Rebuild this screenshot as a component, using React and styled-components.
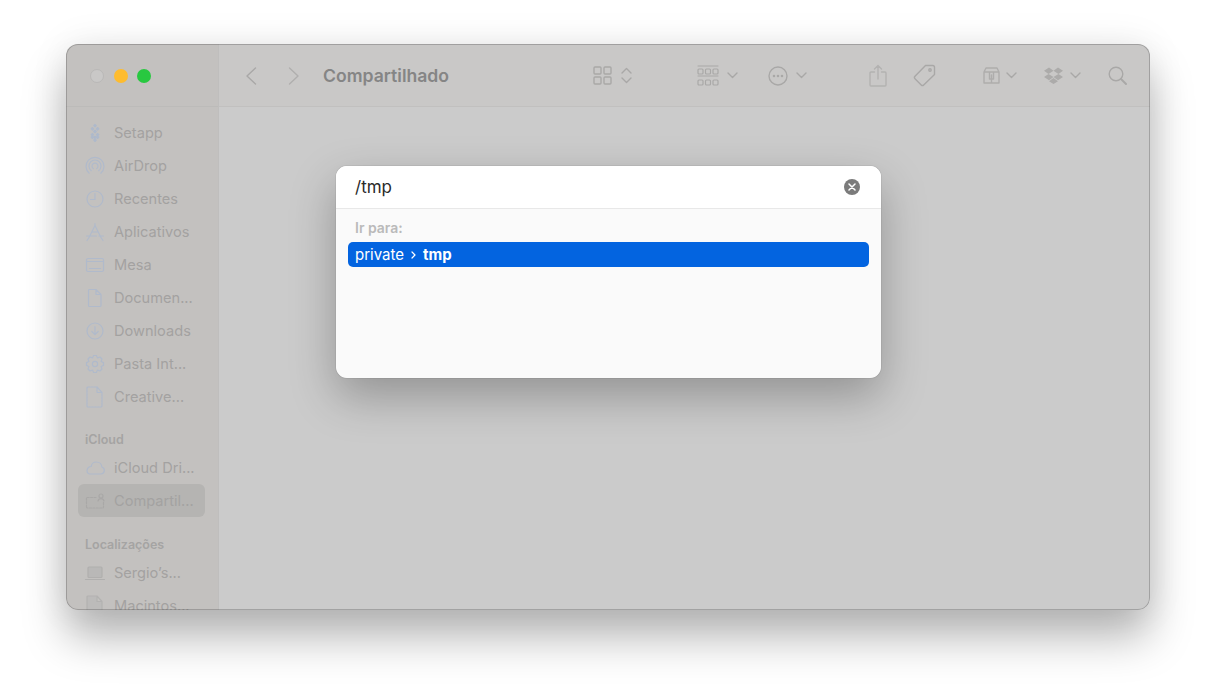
import React from "react";
import styled, { createGlobalStyle } from "styled-components";

const Global = createGlobalStyle`
  html, body { margin: 0; padding: 0; background: #fff; }
  #root { width: 1216px; height: 697px; overflow: hidden; }
  * { box-sizing: border-box; }
`;

const Page = styled.div`
  width: 1216px;
  height: 697px;
  padding: 44px 66px 87px;
  background: #fff;
  font-family: Inter, "Noto Sans", "Liberation Sans", sans-serif;
`;
const Frame = styled.div`
  width: 100%;
  height: 100%;
  border-radius: 12px;
  box-shadow: 0 0 38px rgba(0, 0, 0, 0.08), 0 28px 44px rgba(0, 0, 0, 0.28);
`;
const Window = styled.div`
  position: relative;
  display: flex;
  width: 100%;
  height: 100%;
  border-radius: 12px;
  overflow: hidden;
  background: #cbcbcb;
  &::after {
    content: "";
    position: absolute;
    inset: 0;
    border-radius: 12px;
    pointer-events: none;
    box-shadow: inset 0 0 0 1px rgba(70, 70, 70, 0.3);
  }
`;
const Sidebar = styled.aside`
  flex: 0 0 153px;
  background: #c3c1bf;
  border-right: 1px solid #bfbebd;
  overflow: hidden;
`;
const SideHeader = styled.div`
  height: 63px;
  padding: 1px 0 0 24px;
  display: flex;
  align-items: center;
  gap: 9.5px;
  border-bottom: 1px solid #bcbbb9;
`;
const Light = styled.span`
  width: 14px;
  height: 14px;
  border-radius: 50%;
  background: ${(p) => p.$color};
  border: 1px solid ${(p) => p.$edge || "transparent"};
`;
const SideList = styled.nav`
  padding: 9px 13px 0 12px;
  display: flex;
  flex-direction: column;
`;
const SideRow = styled.div`
  height: 33px;
  flex: none;
  display: flex;
  align-items: center;
  gap: 8px;
  padding-left: 7px;
  border-radius: 6px;
  background: ${(p) => (p.$active ? "#b5b4b2" : "transparent")};
  color: #a3a2a1;
  font-size: 14.6px;
  white-space: nowrap;
`;
const SideIcon = styled.svg`
  width: 22px;
  height: 22px;
  margin-left: -1px;
  flex: none;
  fill: none;
  stroke: ${(p) => p.$tone || "#b0bacb"};
  stroke-width: 1.2;
  stroke-linecap: round;
  stroke-linejoin: round;
`;
const SideHeading = styled.div`
  height: ${(p) => p.$h}px;
  flex: none;
  display: flex;
  align-items: flex-end;
  padding: 0 0 4px 7px;
  color: #a5a4a3;
  font-size: 12.5px;
  font-weight: 600;
`;
const Main = styled.main`
  flex: 1;
  display: flex;
  flex-direction: column;
  min-width: 0;
`;
const Toolbar = styled.header`
  flex: 0 0 63px;
  display: flex;
  align-items: center;
  padding: 1px 23px 0 26px;
  background: #c9c8c7;
  border-bottom: 1px solid #c1c0bf;
`;
const ToolSvg = styled.svg`
  flex: none;
  display: block;
  margin-left: ${(p) => p.$ml || 0}px;
  fill: none;
  stroke: ${(p) => p.$tone || "#a9a8a7"};
  stroke-width: 1.4;
  stroke-linecap: round;
  stroke-linejoin: round;
`;
const Title = styled.h1`
  flex: 1;
  margin: 0 0 0 23px;
  font-size: 17.6px;
  font-weight: 600;
  color: #858585;
  white-space: nowrap;
`;
const ToolGroup = styled.div`
  display: flex;
  align-items: center;
`;
const Canvas = styled.div`
  flex: 1;
  background: #cbcbcb;
`;
const DialogShadow = styled.div`
  position: absolute;
  left: 270px;
  top: 122px;
  width: 545px;
  height: 212px;
  border-radius: 11px;
  box-shadow: 0 0 1px rgba(0, 0, 0, 0.5), 0 18px 46px rgba(0, 0, 0, 0.28);
`;
const Dialog = styled.div`
  position: absolute;
  left: 270px;
  top: 122px;
  width: 545px;
  height: 212px;
  border-radius: 11px;
  overflow: hidden;
  background: #fafafa;
  display: flex;
  flex-direction: column;
`;
const SearchBar = styled.div`
  flex: 0 0 43px;
  display: flex;
  align-items: center;
  justify-content: space-between;
  padding: 0 21px 0 19px;
  background: #fff;
  border-bottom: 1px solid #e8e8e8;
`;
const SearchText = styled.span`
  font-size: 17px;
  color: #2a2a2a;
`;
const ClearButton = styled.span`
  width: 16px;
  height: 16px;
  border-radius: 50%;
  background: #7b7b7b;
  display: flex;
  align-items: center;
  justify-content: center;
`;
const Results = styled.div`
  flex: 1;
  padding: 0 12px;
`;
const ResultsLabel = styled.div`
  height: 32.5px;
  display: flex;
  align-items: flex-end;
  padding: 0 0 6px 7px;
  font-size: 14px;
  font-weight: 600;
  color: #bababa;
`;
const ResultRow = styled.div`
  height: 25.5px;
  display: flex;
  align-items: center;
  padding: 1px 0 0 7px;
  gap: 7px;
  border-radius: 5px;
  background: #0364e0;
  color: #fff;
  font-size: 15px;
`;
const Strong = styled.b`
  font-weight: 700;
`;

const I = ({ children, tone }) => (
  <SideIcon viewBox="0 0 22 22" $tone={tone}>{children}</SideIcon>
);

const gearPath = (() => {
  const pts = [];
  const teeth = 8;
  for (let t = 0; t < teeth; t++) {
    const a = (t / teeth) * Math.PI * 2;
    const s = Math.PI / teeth;
    [[6.6, -s * 0.98], [8.6, -s * 0.42], [8.6, s * 0.42], [6.6, s * 0.98]].forEach(([r, d]) => {
      pts.push(`${(11 + r * Math.cos(a + d)).toFixed(2)} ${(11 + r * Math.sin(a + d)).toFixed(2)}`);
    });
  }
  return "M" + pts.join("L") + "z";
})();

const icons = {
  setapp: (
    <g fill="#aeb9cb" stroke="none">
      {[[11, 3.6], [8.4, 6.8], [13.6, 6.8], [11, 9.5], [8.4, 12.6], [13.6, 12.6], [11, 15.4], [8.4, 15.2], [13.6, 15.2], [11, 18.2]].map(([x, y]) => (
        <rect key={x + "-" + y} x={x - 1.5} y={y - 1.5} width="3" height="3" rx="0.6" transform={`rotate(45 ${x} ${y})`} />
      ))}
    </g>
  ),
  airdrop: (
    <>
      <path d="M9.3 13.6a3 3 0 1 1 3.4 0" />
      <path d="M7.3 15.7a6 6 0 1 1 7.4 0" />
      <path d="M5.2 18.2a9 9 0 1 1 11.6 0" />
    </>
  ),
  clock: (
    <>
      <circle cx="11" cy="11" r="8" />
      <path d="M11 5.5V11.5H6.5" />
    </>
  ),
  apps: (
    <path d="M11 2.5v2M11 4.5L5 16.5M11 4.5l6 12M2.5 15h10M15 15h4.5M3 19.5l2-3M19 19.5l-2-3M8.5 11h5" />
  ),
  desktop: (
    <>
      <rect x="2.5" y="4.5" width="17" height="13" rx="1.5" />
      <path d="M2.5 7.5h17M5.5 14.5h11" />
    </>
  ),
  doc: <path d="M5.5 2.5h6.5l5 5V18.5a1 1 0 0 1-1 1H5.5a1 1 0 0 1-1-1V3.5a1 1 0 0 1 1-1zM12 2.5v5h5" />,
  docLarge: <path d="M4 1h9l5 5.5V20a1 1 0 0 1-1 1H4a1 1 0 0 1-1-1V2a1 1 0 0 1 1-1zM13 1v5.5h5" strokeDasharray="2.2 0.8" />,
  download: (
    <>
      <circle cx="11" cy="11" r="8" />
      <path d="M11 6.5v8M7.8 11.5l3.2 3.2 3.2-3.2" />
    </>
  ),
  gear: (
    <>
      <circle cx="11" cy="11" r="2.6" />
      <path d={gearPath} />
    </>
  ),
  cloud: <path d="M5.5 17h11.5a3.6 3.6 0 0 0 .9-7A5.4 5.4 0 0 0 12.5 5a5 5 0 0 0-5.3 4.5A3.9 3.9 0 0 0 5.5 17z" />,
  shared: (
    <>
      <path d="M2.5 17V7.5h10M2.5 17a1 1 0 0 0 1 1h15a1 1 0 0 0 1-1v-5" strokeDasharray="2 1.4" />
      <circle cx="17" cy="6" r="2" />
      <path d="M14 11c.4-1.6 1.4-2.4 3-2.4s2.6.8 3 2.4" />
    </>
  ),
  laptop: (
    <>
      <rect x="4" y="5" width="14" height="10.5" rx="1" fill="#b9b8b7" />
      <path d="M1.5 17.5h19" />
    </>
  ),
  disk: <path d="M4 1h9l5 5.5V22H3V2a1 1 0 0 1 1-1zM13 1v5.5h5" fill="#bcbbba" />,
};

const sideTop = [
  ["setapp", "Setapp"],
  ["airdrop", "AirDrop"],
  ["clock", "Recentes"],
  ["apps", "Aplicativos"],
  ["desktop", "Mesa"],
  ["doc", "Documen..."],
  ["download", "Downloads"],
  ["gear", "Pasta Int..."],
  ["docLarge", "Creative..."],
];

const Row = ({ icon, label, active, tone }) => (
  <SideRow $active={active}>
    <I tone={tone}>{icons[icon]}</I>
    {label}
  </SideRow>
);

const Chev = ({ ml }) => (
  <ToolSvg $ml={ml} width="11" height="7" viewBox="0 0 11 7">
    <path d="M1 1l4.5 4.5L10 1" />
  </ToolSvg>
);

export default function App() {
  return (
    <Page>
      <Global />
      <Frame>
        <Window>
          <Sidebar>
            <SideHeader>
              <Light $color="#c9c8c7" $edge="#b9b8b7" />
              <Light $color="#febc2e" />
              <Light $color="#28c840" />
            </SideHeader>
            <SideList>
              {sideTop.map(([icon, label]) => (
                <Row key={label} icon={icon} label={label} />
              ))}
              <SideHeading $h={38}>iCloud</SideHeading>
              <Row icon="cloud" label="iCloud Dri..." />
              <Row icon="shared" label="Compartil..." active tone="#a9a8a7" />
              <SideHeading $h={39}>Localizações</SideHeading>
              <Row icon="laptop" label="Sergio’s..." tone="#b0afae" />
              <Row icon="disk" label="Macintos..." tone="#b3b2b1" />
            </SideList>
          </Sidebar>
          <Main>
            <Toolbar>
              <ToolSvg width="12" height="20" viewBox="0 0 12 20">
                <path d="M10.5 2L2 10l8.5 8" />
              </ToolSvg>
              <ToolSvg $ml={31} $tone="#b0afae" width="12" height="20" viewBox="0 0 12 20">
                <path d="M1.5 2L10 10l-8.5 8" />
              </ToolSvg>
              <Title>Compartilhado</Title>
              <ToolGroup>
                <ToolSvg width="19" height="19" viewBox="0 0 19 19">
                  <rect x="1" y="1" width="7" height="7" rx="1" />
                  <rect x="11" y="1" width="7" height="7" rx="1" />
                  <rect x="1" y="11" width="7" height="7" rx="1" />
                  <rect x="11" y="11" width="7" height="7" rx="1" />
                </ToolSvg>
                <ToolSvg $ml={9} width="11" height="17" viewBox="0 0 11 17">
                  <path d="M1 6l4.5-4.5L10 6M1 11l4.5 4.5L10 11" />
                </ToolSvg>
                <ToolSvg $ml={65} width="22" height="21" viewBox="0 0 22 21">
                  <path d="M1 1h20M1 11h20" strokeWidth="1" />
                  <rect x="1" y="4" width="5" height="5" rx="1" strokeWidth="1.2" />
                  <rect x="8.5" y="4" width="5" height="5" rx="1" strokeWidth="1.2" />
                  <rect x="16" y="4" width="5" height="5" rx="1" strokeWidth="1.2" />
                  <rect x="1" y="15" width="5" height="5" rx="1" strokeWidth="1.2" />
                  <rect x="8.5" y="15" width="5" height="5" rx="1" strokeWidth="1.2" />
                  <rect x="16" y="15" width="5" height="5" rx="1" strokeWidth="1.2" />
                </ToolSvg>
                <Chev ml={8} />
                <ToolSvg $ml={30} width="20" height="20" viewBox="0 0 20 20">
                  <circle cx="10" cy="10" r="9" />
                  <circle cx="6" cy="10" r="0.6" />
                  <circle cx="10" cy="10" r="0.6" />
                  <circle cx="14" cy="10" r="0.6" />
                </ToolSvg>
                <Chev ml={8} />
                <ToolSvg $ml={62} $tone="#b3b2b1" width="18" height="23" viewBox="0 0 18 23">
                  <path d="M5.5 8H2a1 1 0 0 0-1 1v12a1 1 0 0 0 1 1h14a1 1 0 0 0 1-1V9a1 1 0 0 0-1-1h-3.5M9 15V1.5M5.5 5L9 1.5 12.5 5" />
                </ToolSvg>
                <ToolSvg $ml={26} width="23" height="23" viewBox="0 0 23 23">
                  <path d="M12.5 1.5h7.2a1.8 1.8 0 0 1 1.8 1.8v7.2L10.7 21a1.8 1.8 0 0 1-2.5 0L2 14.8a1.8 1.8 0 0 1 0-2.5z" />
                  <circle cx="17" cy="6" r="1.2" />
                </ToolSvg>
                <ToolSvg $ml={47} $tone="#aeadac" width="17" height="17" viewBox="0 0 17 17">
                  <path d="M3 1h11l2 4v11H1V5zM1 5h15M6.5 5v7h4V5M8.5 8v8" />
                </ToolSvg>
                <Chev ml={6} />
                <ToolSvg $ml={27} width="19" height="17" viewBox="0 0 19 17" style={{ stroke: "none", fill: "#acabaa" }}>
                  <path d="M5 0.5L0 3.8l4.5 3.1L9.5 3.8zM14 0.5L9.5 3.8l5 3.1 4.5-3.1zM0 10l5 3.2 4.5-3.2-5-3.1zM14.5 6.9l-5 3.1 4.5 3.2 5-3.2zM5 14.2l4.5 2.8 4.5-2.8-4.5-3.2z" />
                </ToolSvg>
                <Chev ml={7} />
                <ToolSvg $ml={27} width="19" height="19" viewBox="0 0 19 19">
                  <circle cx="8" cy="8" r="6.8" />
                  <path d="M13 13l5 5" strokeWidth="1.9" />
                </ToolSvg>
              </ToolGroup>
            </Toolbar>
            <Canvas />
          </Main>
          <DialogShadow />
          <Dialog>
            <SearchBar>
              <SearchText>/tmp</SearchText>
              <ClearButton>
                <svg width="8" height="8" viewBox="0 0 8 8" fill="none" stroke="#fff" strokeWidth="1.5" strokeLinecap="round">
                  <path d="M1 1l6 6M7 1L1 7" />
                </svg>
              </ClearButton>
            </SearchBar>
            <Results>
              <ResultsLabel>Ir para:</ResultsLabel>
              <ResultRow>
                private
                <svg width="5" height="8" viewBox="0 0 5 8" fill="none" stroke="#fff" strokeWidth="1.2" strokeLinecap="round" strokeLinejoin="round">
                  <path d="M1 1l3 3-3 3" />
                </svg>
                <Strong>tmp</Strong>
              </ResultRow>
            </Results>
          </Dialog>
        </Window>
      </Frame>
    </Page>
  );
}
